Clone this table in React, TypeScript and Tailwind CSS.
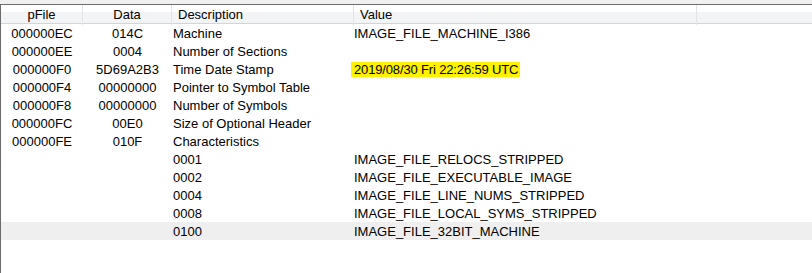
import React from "react";

type Row = {
  pFile: string;
  data: string;
  desc: string;
  value: string;
  mark?: boolean;
  sel?: boolean;
};

const rows: Row[] = [
  { pFile: "000000EC", data: "014C", desc: "Machine", value: "IMAGE_FILE_MACHINE_I386" },
  { pFile: "000000EE", data: "0004", desc: "Number of Sections", value: "" },
  { pFile: "000000F0", data: "5D69A2B3", desc: "Time Date Stamp", value: "2019/08/30 Fri 22:26:59 UTC", mark: true },
  { pFile: "000000F4", data: "00000000", desc: "Pointer to Symbol Table", value: "" },
  { pFile: "000000F8", data: "00000000", desc: "Number of Symbols", value: "" },
  { pFile: "000000FC", data: "00E0", desc: "Size of Optional Header", value: "" },
  { pFile: "000000FE", data: "010F", desc: "Characteristics", value: "" },
  { pFile: "", data: "", desc: "0001", value: "IMAGE_FILE_RELOCS_STRIPPED" },
  { pFile: "", data: "", desc: "0002", value: "IMAGE_FILE_EXECUTABLE_IMAGE" },
  { pFile: "", data: "", desc: "0004", value: "IMAGE_FILE_LINE_NUMS_STRIPPED" },
  { pFile: "", data: "", desc: "0008", value: "IMAGE_FILE_LOCAL_SYMS_STRIPPED" },
  { pFile: "", data: "", desc: "0100", value: "IMAGE_FILE_32BIT_MACHINE", sel: true },
];

const cols = "grid grid-cols-[82px_89px_182px_343px_1fr]";

export default function App() {
  return (
    <div className="w-[812px] h-[273px] overflow-hidden bg-[#f0f0f0] pt-1 font-['Liberation_Sans',Arial,sans-serif] text-[13px] text-black">
      <div className="h-full border-t border-l border-[#6b6b6b] bg-white">
        {/* header */}
        <div className={`${cols} h-[19px] border-b border-[#d5d5d5] bg-[linear-gradient(#ffffff_0,#ffffff_40%,#f3f4f6_40%,#f3f4f6_100%)]`}>
          <div className="flex items-center justify-center border-r border-[#e3e3e3]">pFile</div>
          <div className="flex items-center justify-center border-r border-[#e3e3e3]">Data</div>
          <div className="flex items-center pl-[6px] border-r border-[#e3e3e3]">Description</div>
          <div className="flex items-center pl-[6px] border-r border-[#e3e3e3]">Value</div>
          <div />
        </div>
        {/* rows */}
        {rows.map((r, i) => (
          <div key={i} className={`${cols} h-[18px] ${r.sel ? "bg-[#efefef]" : ""}`}>
            <div className="flex items-center justify-center">{r.pFile}</div>
            <div className="flex items-center justify-center">{r.data}</div>
            <div className="flex items-center pl-[1px]">{r.desc}</div>
            <div className="flex items-center">
              {r.mark ? (
                <span className="bg-[#fff200] leading-[15px] ml-[-3px] pl-[3px] pr-[2px] tracking-[-0.15px]">{r.value}</span>
              ) : (
                <span>{r.value}</span>
              )}
            </div>
            <div />
          </div>
        ))}
      </div>
    </div>
  );
}
